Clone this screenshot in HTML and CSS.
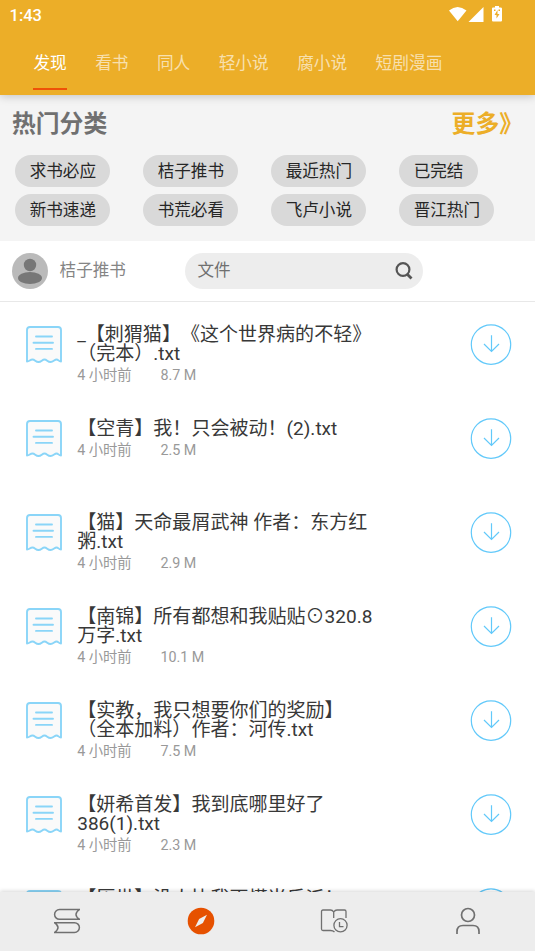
FILE: index.html
```html
<!DOCTYPE html>
<html lang="zh-CN">
<head>
<meta charset="utf-8">
<meta name="viewport" content="width=device-width, initial-scale=1">
<title>发现</title>
<link rel="stylesheet" href="styles.css">
</head>
<body>
<svg class="defs" width="0" height="0" aria-hidden="true">
  <symbol id="file" viewBox="0 0 38 38">
    <path d="M2 36.500V5Q2 2 5 2H33Q36 2 36 5V36.500C33.500 36.500 33.500 34.500 31.500 34.500S28.500 37 25.500 37S22 34.500 19.500 34.500S16.500 37 13.500 37S10 34.500 7.500 34.500S4.500 36.500 2 36.500Z" fill="#fafafa" stroke="#8ad5f8" stroke-width="1.900" stroke-linejoin="round"/>
    <path d="M11 11.500H27M8.500 17.700H28M11 23.900H27" stroke="#8ad5f8" stroke-width="1.900" stroke-linecap="round"/>
  </symbol>
  <symbol id="download" viewBox="0 0 42 42">
    <circle cx="21" cy="20.600" r="19.700" fill="none" stroke="#62c9fa" stroke-width="1.200"/>
    <path d="M21.500 11.200V27.500M14 20L21.500 27.500L29 20" fill="none" stroke="#62c9fa" stroke-width="1.200"/>
  </symbol>
</svg>
<div class="app">
  <header class="header">
    <div class="status">
      <span class="clock">1:43</span>
      <svg class="status-icons" width="56" height="20" viewBox="0 0 56 20" fill="#fff">
        <path d="M0 5.500Q8.500 -1.500 17.500 5.500L8.700 16.300Z"/>
        <path d="M34.500 2V17H19.500Z"/>
        <path d="M46 1H50V2.500H51.500Q53 2.500 53 3.500V15.500Q53 16.500 52 16.500H44Q43 16.500 43 15.500V3.500Q43 2.500 44 2.500H46Z"/>
        <path d="M48.500 5L45.500 10H47.500V13.500L50.500 9H48.500ZM45 4.500H46.500V6H45ZM49.500 4.500H51V6H49.500Z" fill="#ecae28"/>
      </svg>
    </div>
    <nav class="tabs">
      <a class="tab active">发现</a><a class="tab">看书</a><a class="tab">同人</a><a class="tab">轻小说</a><a class="tab">腐小说</a><a class="tab">短剧漫画</a>
    </nav>
  </header>
  <section class="hot">
    <div class="hot-head"><h2>热门分类</h2><a class="more">更多》</a></div>
    <div class="chips">
      <span class="chip">求书必应</span><span class="chip">桔子推书</span><span class="chip">最近热门</span><span class="chip">已完结</span>
      <span class="chip">新书速递</span><span class="chip">书荒必看</span><span class="chip">飞卢小说</span><span class="chip">晋江热门</span>
    </div>
  </section>
  <section class="bar">
    <svg width="36" height="36" viewBox="0 0 36 36"><circle cx="18" cy="18" r="18" fill="#bababa"/><circle cx="18" cy="12" r="6.200" fill="#777"/><ellipse cx="18" cy="25" rx="12" ry="6" fill="#777"/></svg>
    <span class="user">桔子推书</span>
    <div class="search"><span>文件</span>
      <svg width="18" height="19" viewBox="0 0 18 19" fill="none" stroke="#555"><circle cx="8" cy="8.500" r="6.400" stroke-width="2.200"/><path d="M12 13L16.500 17.500" stroke-width="2.800"/></svg>
    </div>
  </section>
  <main class="list">
    <article class="row"><svg class="file"><use href="#file"/></svg><div class="info"><h3>_【刺猬猫】《这个世界病的不轻》<br>（完本）.txt</h3><p><span>4 小时前</span><span>8.7 M</span></p></div><svg class="download"><use href="#download"/></svg></article>
    <article class="row"><svg class="file"><use href="#file"/></svg><div class="info"><h3>【空青】我！只会被动！(2).txt</h3><p><span>4 小时前</span><span>2.5 M</span></p></div><svg class="download"><use href="#download"/></svg></article>
    <article class="row"><svg class="file"><use href="#file"/></svg><div class="info"><h3>【猫】天命最屑武神 作者：东方红<br>粥.txt</h3><p><span>4 小时前</span><span>2.9 M</span></p></div><svg class="download"><use href="#download"/></svg></article>
    <article class="row"><svg class="file"><use href="#file"/></svg><div class="info"><h3>【南锦】所有都想和我贴贴⊙320.8<br>万字.txt</h3><p><span>4 小时前</span><span>10.1 M</span></p></div><svg class="download"><use href="#download"/></svg></article>
    <article class="row"><svg class="file"><use href="#file"/></svg><div class="info"><h3>【实教，我只想要你们的奖励】<br>（全本加料）作者：河传.txt</h3><p><span>4 小时前</span><span>7.5 M</span></p></div><svg class="download"><use href="#download"/></svg></article>
    <article class="row"><svg class="file"><use href="#file"/></svg><div class="info"><h3>【妍希首发】我到底哪里好了<br>386(1).txt</h3><p><span>4 小时前</span><span>2.3 M</span></p></div><svg class="download"><use href="#download"/></svg></article>
    <article class="row"><svg class="file"><use href="#file"/></svg><div class="info"><h3>【历世】没人比我更懂当反派！</h3></div><svg class="download"><use href="#download"/></svg></article>
  </main>
  <nav class="bottom">
    <a><svg width="30" height="30" viewBox="0 0 30 30" fill="none" stroke="#707070" stroke-width="1.500"><path d="M28 3.500H7.500A4.900 4.900 0 0 0 7.500 13.300H28M27.500 3.500Q20.500 8.400 27.500 13.300M2 16.700H22.500A4.900 4.900 0 0 1 22.500 26.500H2M2.500 16.700Q9.500 21.600 2.500 26.500"/></svg></a>
    <a><svg width="30" height="30" viewBox="0 0 30 30"><circle cx="15" cy="15" r="13.300" fill="#e65100"/><path d="M21 8.800L16.900 17L9 21.200L13.100 13Z" fill="#eee"/></svg></a>
    <a><svg width="30" height="30" viewBox="0 0 30 30" fill="none" stroke="#707070" stroke-width="1.300"><path d="M14.700 12V6Q13.500 4 11.500 4H4Q2.500 4 2.500 5.500V23Q2.500 24.500 4 24.500H11.500Q14 24.500 15.500 26M14.700 6Q16 4 18 4H25.500Q27 4 27 5.500V12"/><circle cx="21.500" cy="19.300" r="6.600"/><path d="M20.500 16V20.700H24.500"/></svg></a>
    <a><svg width="30" height="30" viewBox="0 0 30 30" fill="none" stroke="#707070" stroke-width="1.700"><circle cx="15" cy="9" r="6.500"/><path d="M4 28V25.500Q4 19.500 10 19.500H20Q26 19.500 26 25.500V28"/></svg></a>
  </nav>
</div>
</body>
</html>
```
FILE: styles.css
```css
* { box-sizing: border-box; }
body { margin: 0; font-family: Roboto, "Noto Sans CJK SC", sans-serif; color: #383838; background: #fff; text-spacing-trim: space-all; }
h2, h3, p { margin: 0; }
svg { display: block; flex: none; }
.defs { position: absolute; }
.app { width: 535px; height: 951px; overflow: hidden; display: flex; flex-direction: column; }
.header { flex: none; height: 95px; background: #ecae28; box-shadow: 0 1px 9px rgba(0,0,0,.22); position: relative; z-index: 1; }
.status { height: 30px; padding: 5px 30px 0 9.5px; display: flex; justify-content: space-between; color: #fff; }
.clock { font-size: 16.5px; font-weight: 500; line-height: 21px; }
.tabs { display: flex; gap: 28.4px; padding-left: 33.4px; height: 60px; }
.tab { font-size: 16.7px; line-height: 67px; color: rgba(255,255,255,.64); white-space: nowrap; }
.active { color: #fff; border-bottom: 2px solid #ee5208; }
.hot { flex: none; height: 146px; background: #f4f4f4; padding: 12px 24px 0 12px; }
.hot-head { display: flex; justify-content: space-between; font-size: 23.8px; line-height: 35px; font-weight: 700; color: #707070; }
.hot-head h2 { font-size: inherit; }
.more { color: #ecae28; margin-right: -12px; }
.chips { display: grid; grid-template-columns: repeat(4, 128px); row-gap: 7px; padding: 12.5px 0 0 3.4px; }
.chip { justify-self: start; height: 32px; padding: 0 14.3px; border-radius: 16px; background: #d9d9d9; font-size: 16.6px; line-height: 34px; color: #262626; white-space: nowrap; }
.bar { flex: none; height: 61px; display: flex; align-items: center; padding: 0 12px 1px; border-bottom: 1px solid #e8e8e8; }
.user { width: 126px; margin-left: 11.6px; font-size: 16.6px; line-height: 36px; color: #858585; margin-right: -0.6px; }
.search { width: 238px; height: 36px; border-radius: 18px; background: #ededed; display: flex; align-items: center; justify-content: space-between; padding: 0 10px 0 12.5px; font-size: 16.6px; line-height: 36px; color: #707070; }
.list { flex: 1; min-height: 0; overflow: hidden; }
.row { display: flex; height: 94px; padding: 22px 23px 0 25px; }
.file { width: 38px; height: 38px; margin-top: 1px; }
.info { flex: 1; padding: 1px 0 0 14.2px; }
.info h3 { font-size: 19.05px; line-height: 19px; font-weight: 400; white-space: nowrap; }
.info p { display: flex; font-size: 14.3px; line-height: 25px; color: #999; }
.info p span:first-child { width: 83.2px; }
.download { width: 42px; height: 42px; }
.bottom { flex: none; height: 59px; padding-bottom: 1px; background: #ededed; display: grid; grid-template-columns: repeat(4, 133.7px); align-items: center; justify-items: center; box-shadow: 0 -1px 4px rgba(0,0,0,.16); position: relative; }
```
